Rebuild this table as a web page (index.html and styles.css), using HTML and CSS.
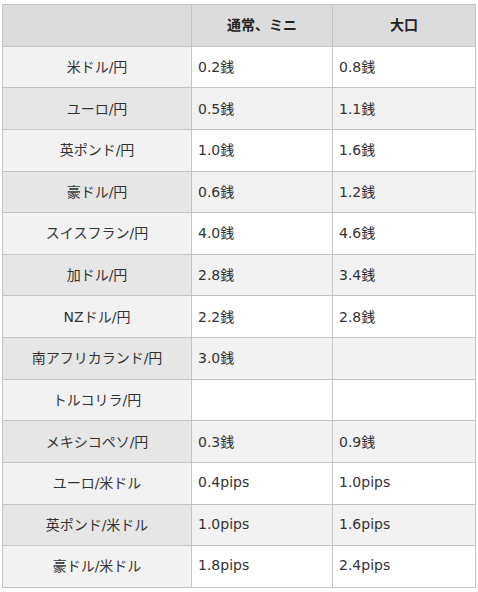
FILE: index.html
```html
<!DOCTYPE html>
<html lang="ja">
<head>
<meta charset="utf-8">
<link rel="stylesheet" href="styles.css">
</head>
<body>
<table class="spread">
<colgroup>
<col class="c1"><col class="c2"><col class="c3">
</colgroup>
<thead>
<tr><th></th><th>通常、ミニ</th><th>大口</th></tr>
</thead>
<tbody>
<tr><td class="pair">米ドル/円</td><td>0.2銭</td><td>0.8銭</td></tr>
<tr><td class="pair">ユーロ/円</td><td>0.5銭</td><td>1.1銭</td></tr>
<tr><td class="pair">英ポンド/円</td><td>1.0銭</td><td>1.6銭</td></tr>
<tr><td class="pair">豪ドル/円</td><td>0.6銭</td><td>1.2銭</td></tr>
<tr><td class="pair">スイスフラン/円</td><td>4.0銭</td><td>4.6銭</td></tr>
<tr><td class="pair">加ドル/円</td><td>2.8銭</td><td>3.4銭</td></tr>
<tr><td class="pair">NZドル/円</td><td>2.2銭</td><td>2.8銭</td></tr>
<tr><td class="pair">南アフリカランド/円</td><td>3.0銭</td><td></td></tr>
<tr><td class="pair">トルコリラ/円</td><td></td><td></td></tr>
<tr><td class="pair">メキシコペソ/円</td><td>0.3銭</td><td>0.9銭</td></tr>
<tr><td class="pair">ユーロ/米ドル</td><td>0.4pips</td><td>1.0pips</td></tr>
<tr><td class="pair">英ポンド/米ドル</td><td>1.0pips</td><td>1.6pips</td></tr>
<tr><td class="pair">豪ドル/米ドル</td><td>1.8pips</td><td>2.4pips</td></tr>
</tbody>
</table>
</body>
</html>
```
FILE: styles.css
```css
html, body {
  margin: 0;
  padding: 0;
  background: #fff;
}
body {
  font-family: "DejaVu Sans", "Noto Sans CJK JP", sans-serif;
  font-size: 14px;
  color: #333;
}
.spread {
  margin: 4px 0 0 2px;
  width: 473px;
  border-collapse: collapse;
  table-layout: fixed;
}
.c1 { width: 189px; }
.c2 { width: 141px; }
.c3 { width: 143px; }
.spread tr {
  height: 41.64px;
}
.spread th,
.spread td {
  border: 1px solid #c4c4c4;
  padding: 0 6px 2px;
  vertical-align: middle;
  text-align: left;
}
.spread th {
  background: #dcdcdc;
  font-weight: bold;
  color: #222;
  text-align: center;
}
.spread td.pair {
  text-align: center;
  background: #f2f2f2;
}
.spread tbody tr:nth-child(even) td {
  background: #f2f2f2;
}
.spread tbody tr:nth-child(even) td.pair {
  background: #e6e6e6;
}
```
